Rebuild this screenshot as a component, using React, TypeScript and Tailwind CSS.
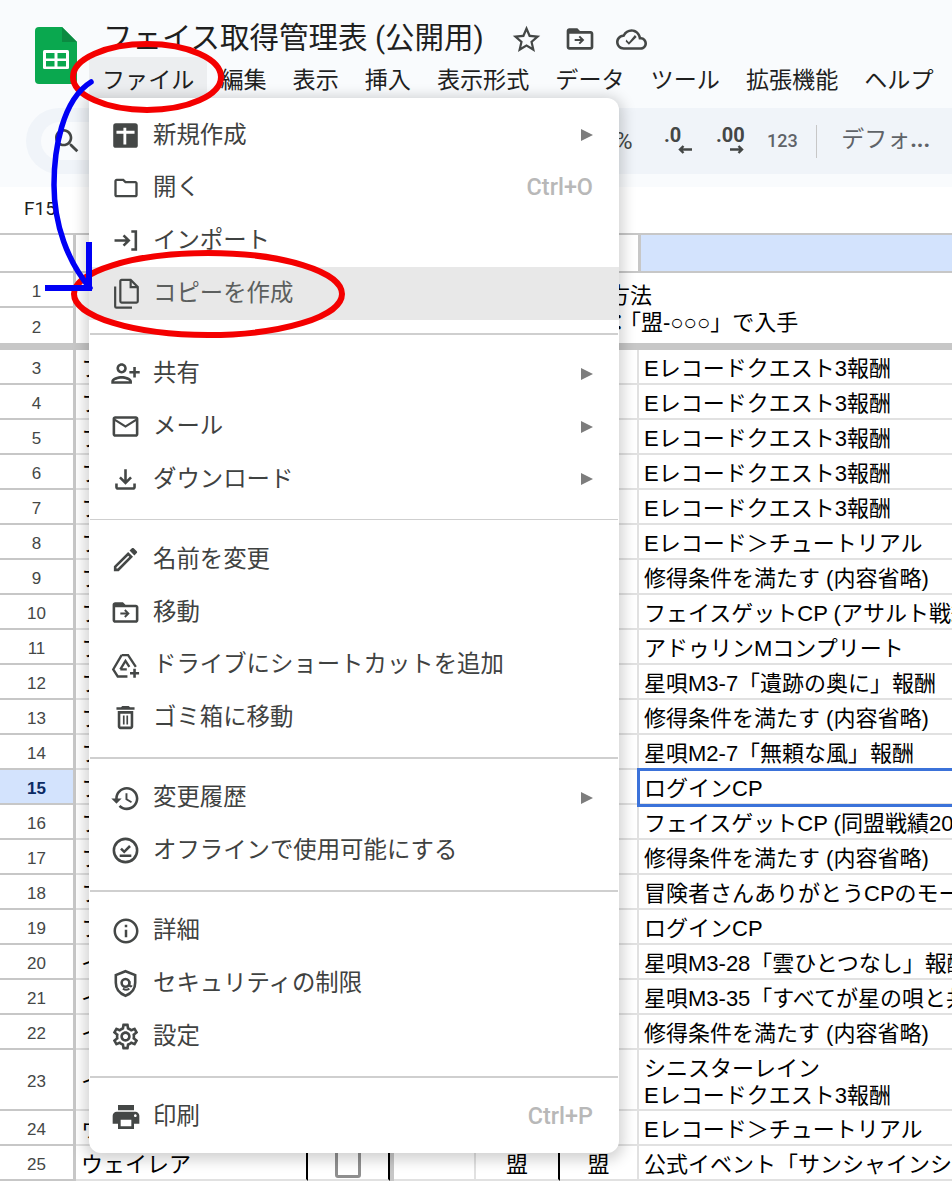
import React from "react";

const ICON = "#444746";
const P: Record<string, string> = {
  star: "M22 9.24l-7.19-.62L12 2 9.19 8.63 2 9.24l5.46 4.73L5.82 21 12 17.27 18.18 21l-1.63-7.03L22 9.24zM12 15.4l-3.76 2.27 1-4.28-3.32-2.88 4.38-.38L12 6.1l1.71 4.04 4.38.38-3.32 2.88 1 4.28L12 15.4z",
  move: "M20 6h-8l-2-2H4c-1.1 0-2 .9-2 2v12c0 1.1.9 2 2 2h16c1.1 0 2-.9 2-2V8c0-1.1-.9-2-2-2zm0 12H4V8h16v10zM12 9.5l-1.06 1.06L12.38 12H8v1.5h4.38l-1.44 1.44L12 16l3.25-3.25L12 9.5z",
  cloud: "M19.35 10.04C18.67 6.59 15.64 4 12 4 9.11 4 6.6 5.64 5.35 8.04 2.34 8.36 0 10.91 0 14c0 3.31 2.69 6 6 6h13c2.76 0 5-2.24 5-5 0-2.64-2.05-4.78-4.65-4.96zM19 18H6c-2.21 0-4-1.79-4-4 0-2.05 1.53-3.76 3.56-3.97l1.07-.11.5-.95C8.08 7.14 9.94 6 12 6c2.62 0 4.88 1.86 5.39 4.43l.3 1.5 1.53.11c1.56.1 2.78 1.41 2.78 2.96 0 1.65-1.35 3-3 3zm-9-3.82l-2.09-2.09L7.5 13.5 10 16l6.01-6.01-1.41-1.41z",
  search: "M15.5 14h-.79l-.28-.27C15.41 12.59 16 11.11 16 9.5 16 5.91 13.09 3 9.5 3S3 5.91 3 9.5 5.91 16 9.5 16c1.61 0 3.09-.59 4.23-1.57l.27.28v.79l5 4.99L20.49 19l-4.99-5zm-6 0C7.01 14 5 11.99 5 9.5S7.01 5 9.5 5 14 7.01 14 9.5 11.99 14 9.5 14z",
  open: "M20 6h-8l-2-2H4c-1.1 0-1.99.9-1.99 2L2 18c0 1.1.9 2 2 2h16c1.1 0 2-.9 2-2V8c0-1.1-.9-2-2-2zm0 12H4V6h5.17l2 2H20v10z",
  person: "M15 12c2.21 0 4-1.79 4-4s-1.79-4-4-4-4 1.79-4 4 1.79 4 4 4zm0-6c1.1 0 2 .9 2 2s-.9 2-2 2-2-.9-2-2 .9-2 2-2zM6 10V7H4v3H1v2h3v3h2v-3h3v-2H6zm9 4c-2.67 0-8 1.34-8 4v2h16v-2c0-2.66-5.33-4-8-4zm-6 4c.22-.72 3.31-2 6-2 2.7 0 5.8 1.29 6 2H9z",
  mail: "M22 6c0-1.1-.9-2-2-2H4c-1.1 0-2 .9-2 2v12c0 1.1.9 2 2 2h16c1.1 0 2-.9 2-2V6zm-2 0l-8 5-8-5h16zm0 12H4V8l8 5 8-5v10z",
  download: "M18 15v3H6v-3H4v3c0 1.1.9 2 2 2h12c1.1 0 2-.9 2-2v-3h-2zm-1-4l-1.41-1.41L13 12.17V4h-2v8.17L8.41 9.59 7 11l5 5 5-5z",
  edit: "M14.06 9.02l.92.92L5.92 19H5v-.92l9.06-9.06M17.66 3c-.25 0-.51.1-.7.29l-1.83 1.83 3.75 3.75 1.83-1.83c.39-.39.39-1.02 0-1.41l-2.34-2.34c-.2-.2-.45-.29-.71-.29zm-3.6 3.19L3 17.25V21h3.75L17.81 9.94l-3.75-3.75z",
  trash: "M16 9v10H8V9h8m-1.5-6h-5l-1 1H5v2h14V4h-3.5l-1-1zM18 7H6v12c0 1.1.9 2 2 2h8c1.1 0 2-.9 2-2V7zM10 10.5h1.3v7H10zM12.7 10.5H14v7h-1.3z",
  history: "M13 3c-4.97 0-9 4.03-9 9H1l3.89 3.89.07.14L9 12H6c0-3.87 3.13-7 7-7s7 3.13 7 7-3.13 7-7 7c-1.93 0-3.68-.79-4.94-2.06l-1.42 1.42C8.27 19.99 10.51 21 13 21c4.97 0 9-4.03 9-9s-4.03-9-9-9zm-1 5v5l4.28 2.54.72-1.21-3.5-2.08V8H12z",
  info: "M11 7h2v2h-2zm0 4h2v6h-2zm1-9C6.48 2 2 6.48 2 12s4.48 10 10 10 10-4.48 10-10S17.52 2 12 2zm0 18c-4.41 0-8-3.59-8-8s3.59-8 8-8 8 3.59 8 8-3.59 8-8 8z",
  gear: "M19.43 12.98c.04-.32.07-.64.07-.98 0-.34-.03-.66-.07-.98l2.11-1.65c.19-.15.24-.42.12-.64l-2-3.46c-.09-.16-.26-.25-.44-.25-.06 0-.12.01-.17.03l-2.49 1c-.52-.4-1.08-.73-1.69-.98l-.38-2.65C14.46 2.18 14.25 2 14 2h-4c-.25 0-.46.18-.49.42l-.38 2.65c-.61.25-1.17.59-1.69.98l-2.49-1c-.06-.02-.12-.03-.18-.03-.17 0-.34.09-.43.25l-2 3.46c-.13.22-.07.49.12.64l2.11 1.65c-.04.32-.07.65-.07.98 0 .33.03.66.07.98l-2.11 1.65c-.19.15-.24.42-.12.64l2 3.46c.09.16.26.25.44.25.06 0 .12-.01.17-.03l2.49-1c.52.4 1.08.73 1.69.98l.38 2.65c.03.24.24.42.49.42h4c.25 0 .46-.18.49-.42l.38-2.65c.61-.25 1.17-.59 1.69-.98l2.49 1c.06.02.12.03.18.03.17 0 .34-.09.43-.25l2-3.46c.12-.22.07-.49-.12-.64l-2.11-1.65zm-1.98-1.71c.04.31.05.52.05.73 0 .21-.02.43-.05.73l-.14 1.13.89.7 1.08.84-.7 1.21-1.27-.51-1.04-.42-.9.68c-.43.32-.84.56-1.25.73l-1.06.43-.16 1.13-.2 1.35h-1.4l-.19-1.35-.16-1.13-1.06-.43c-.43-.18-.83-.41-1.23-.71l-.91-.7-1.06.43-1.27.51-.7-1.21 1.08-.84.89-.7-.14-1.13c-.03-.31-.05-.54-.05-.74s.02-.43.05-.73l.14-1.13-.89-.7-1.08-.84.7-1.21 1.27.51 1.04.42.9-.68c.43-.32.84-.56 1.25-.73l1.06-.43.16-1.13.2-1.35h1.39l.19 1.35.16 1.13 1.06.43c.43.18.83.41 1.23.71l.91.7 1.06-.43 1.27-.51.7 1.21-1.07.85-.89.7.14 1.13zM12 8c-2.21 0-4 1.79-4 4s1.79 4 4 4 4-1.79 4-4-1.79-4-4-4zm0 6c-1.1 0-2-.9-2-2s.9-2 2-2 2 .9 2 2-.9 2-2 2z",
  print: "M19 8H5c-1.66 0-3 1.34-3 3v6h4v4h12v-4h4v-6c0-1.66-1.34-3-3-3zm-3 11H8v-5h8v5zm3-7c-.55 0-1-.45-1-1s.45-1 1-1 1 .45 1 1-.45 1-1 1zm-1-9H6v4h12V3z",
};

function Ic({ name, size = 31, flip, color = ICON }: { name: string; size?: number; flip?: boolean; color?: string }) {
  return (
    <svg width={size} height={size} viewBox="0 0 24 24" fill={color} className="shrink-0">
      <path d={P[name]} transform={flip ? "translate(24 0) scale(-1 1)" : undefined} />
    </svg>
  );
}

function Custom({ name }: { name: string }) {
  const s = { fill: "none", stroke: ICON, strokeWidth: 2 } as const;
  return (
    <svg width={31} height={31} viewBox="0 0 24 24" className="shrink-0">
      {name === "new" && (
        <>
          <rect x="2.5" y="2.5" width="19" height="19" rx="2" fill={ICON} />
          <path d="M5 9.5h14M11.5 6v13" stroke="#fff" strokeWidth="2.2" />
        </>
      )}
      {name === "import" && <path d="M3.5 12h11M10.5 8l4 4-4 4M16.5 5h3.5v14h-3.5" {...s} />}
      {name === "copy" && (
        <>
          <path d="M9 1.5h7l5.5 5.5v11a1 1 0 0 1-1 1H9a1 1 0 0 1-1-1V2.5a1 1 0 0 1 1-1z" {...s} strokeWidth="1.7" />
          <path d="M16 1.5V7h5.5" {...s} strokeWidth="1.7" />
          <path d="M4 6.5V22a1 1 0 0 0 1 1h12" {...s} strokeWidth="1.7" />
        </>
      )}
      {name === "drive" && (
        <>
          <path d="M9 4h5l6 9M9 4l-6.5 11L6 20.5h7.5M8 15l4-6.5 3 4.5M8 15h5" {...s} strokeWidth="1.8" />
          <path d="M19 14.5v7M15.5 18h7" {...s} />
        </>
      )}
      {name === "offline" && (
        <>
          <circle cx="12" cy="12" r="9" {...s} />
          <path d="M8.5 10.5l2.5 2.5 4.5-4.5M7.5 16h9" {...s} />
        </>
      )}
      {name === "shield" && (
        <>
          <path d="M12 2.5l7.5 3v6c0 4.8-3.2 8.4-7.5 10-4.3-1.6-7.5-5.2-7.5-10v-6z" {...s} />
          <circle cx="12" cy="11.5" r="3" {...s} />
          <path d="M15 10v3c0 1.5 1.4 1.5 1.8.5M15 16c-1.5 1-3.5 1-5 0" {...s} strokeWidth="1.6" />
        </>
      )}
    </svg>
  );
}

function MenuRow({ icon, label, right, sub, active }: { icon: React.ReactNode; label: string; right?: string; sub?: boolean; active?: boolean }) {
  return (
    <div className={`flex h-[52.75px] items-center pl-[20px] pr-[26px] ${active ? "bg-[#e8e8e8]" : ""}`}>
      <div className="flex w-[33px] justify-center">{icon}</div>
      <span className={`ml-[11px] flex-1 text-[23.4px] leading-none whitespace-nowrap ${active ? "text-[#5c5f5e]" : "text-[#3f4241]"}`}>{label}</span>
      {right && <span className="text-[23.4px] leading-none font-medium text-[#b8b8b8]">{right}</span>}
      {sub && (
        <svg width="12" height="12" viewBox="0 0 12 12" className="shrink-0">
          <path d="M0 0l12 6-12 6z" fill="#7d7d7d" />
        </svg>
      )}
    </div>
  );
}

const Sep = () => <div className="mx-[1px] my-[13px] h-[1.5px] bg-[#cfcfcf]" />;

type R = { n: number; a: string; f: string[]; h?: string; sel?: boolean; check?: boolean; mei?: boolean };
const Q = "Eレコードクエスト3報酬";
const T = "Eレコード＞チュートリアル";
const S = "修得条件を満たす (内容省略)";
const rows: R[] = [
  [3, "フ", Q], [4, "フ", Q], [5, "フ", Q], [6, "フ", Q], [7, "フ", Q], [8, "フ", T], [9, "フ", S],
  [10, "フ", "フェイスゲットCP (アサルト戦績"], [11, "フ", "アドゥリンMコンプリート"], [12, "フ", "星唄M3-7「遺跡の奥に」報酬"],
  [13, "フ", S], [14, "フ", "星唄M2-7「無頼な風」報酬"], [15, "フ", "ログインCP"], [16, "フ", "フェイスゲットCP (同盟戦績20"],
  [17, "フ", S], [18, "フ", "冒険者さんありがとうCPのモーグリ"], [19, "フ", "ログインCP"], [20, "イ", "星唄M3-28「雲ひとつなし」報酬"],
  [21, "イ", "星唄M3-35「すべてが星の唄と共に」"], [22, "イ", S],
].map(([n, a, f]) => ({ n: n as number, a: a as string, f: [f as string], sel: n === 15 }));
rows.push({ n: 23, a: "イ", f: ["シニスターレイン", Q], h: "h-[61px]" });
rows.push({ n: 24, a: "ウ", f: [T] });
rows.push({ n: 25, a: "ウェイレア", f: ["公式イベント「サンシャインシーカー」"], check: true, mei: true });

function GridRow({ r }: { r: R }) {
  const line = "border-b-2 border-[#e1e1e1]";
  return (
    <div className={`flex ${r.h ?? "h-[35px]"}`}>
      <div className={`flex w-[76px] shrink-0 items-center justify-center border-r-[3px] border-b-2 border-[#c7c7c7] pt-[4px] text-[17px] ${r.sel ? "bg-[#d3e3fd] font-bold text-[#0b2a63]" : "bg-white text-[#444746]"}`}>{r.n}</div>
      <div className={`flex w-[232px] shrink-0 items-center border-r-2 border-r-black pt-[4px] pl-[5px] ${line}`}>{r.a}</div>
      <div className={`flex w-[82px] shrink-0 items-center justify-center border-r-2 border-r-black ${line}`}>
        {r.check && <div className="h-[30px] w-[26px] rounded-[3px] border-[3px] border-[#8f8f8f]" />}
      </div>
      <div className="w-[4px] shrink-0 border-b-2 border-[#c7c7c7] bg-[#c7c7c7]" />
      <div className={`w-[82px] shrink-0 border-r-2 border-r-[#e1e1e1] ${line}`} />
      <div className={`flex w-[84px] shrink-0 items-center justify-center border-r-2 border-r-black pt-[4px] ${line}`}>{r.mei && "盟"}</div>
      <div className={`flex w-[79px] shrink-0 items-center justify-center border-r-2 border-r-[#e1e1e1] pt-[4px] ${line}`}>{r.mei && "盟"}</div>
      <div className={`relative flex w-[400px] shrink-0 flex-col justify-center pt-[4px] pl-[5px] leading-[27px] whitespace-nowrap ${line} ${r.sel ? "z-10 outline-3 -outline-offset-1 outline-[#3b72d9]" : ""}`}>
        {r.f.map((t) => (
          <div key={t}>{t}</div>
        ))}
      </div>
    </div>
  );
}

const menuBar = ["ファイル", "編集", "表示", "挿入", "表示形式", "データ", "ツール", "拡張機能", "ヘルプ"];

export default function App() {
  return (
    <div className="relative h-[1182px] w-[952px] overflow-hidden bg-white text-[22px] leading-none text-black [font-family:'Liberation_Sans','Noto_Sans_CJK_JP',sans-serif]">
      {/* header */}
      <header className="h-[187px] bg-[#f9fbfd] [font-family:Roboto,'Noto_Sans_CJK_JP',sans-serif]">
        <div className="flex h-[108px]">
          <svg width="42" height="57" viewBox="0 0 42 57" className="mt-[27px] ml-[35px] shrink-0">
            <path d="M4 0h23l15 15v38a4 4 0 0 1-4 4H4a4 4 0 0 1-4-4V4a4 4 0 0 1 4-4z" fill="#0aa84f" />
            <path d="M27 0l15 15-15 0z" fill="#0b8a41" />
            <rect x="8" y="23" width="26" height="19" rx="1.5" fill="#fff" />
            <rect x="11" y="26" width="8.5" height="5.5" fill="#0aa84f" />
            <rect x="22.5" y="26" width="8.5" height="5.5" fill="#0aa84f" />
            <rect x="11" y="34" width="8.5" height="5.5" fill="#0aa84f" />
            <rect x="22.5" y="34" width="8.5" height="5.5" fill="#0aa84f" />
          </svg>
          <div className="ml-[12px] flex flex-col">
            <div className="flex h-[57px] items-center pt-[21px] pl-[14px]">
              <span className="text-[29.5px] leading-none whitespace-nowrap text-[#1f1f1f]">フェイス取得管理表 (公開用)</span>
              <div className="ml-[26px]"><Ic name="star" size={33} /></div>
              <div className="ml-[21px]"><Ic name="move" size={32} /></div>
              <div className="ml-[20px]"><Ic name="cloud" size={31} /></div>
            </div>
            <div className="flex h-[41px] text-[23.1px] text-[#1f1f1f]">
              {menuBar.map((m, i) => (
                <span key={m} className={`flex items-center px-[13px] pt-[6px] whitespace-nowrap ${i === 0 ? "bg-[#eceef0]" : ""}`}>{m}</span>
              ))}
            </div>
          </div>
        </div>
        {/* toolbar */}
        <div className="ml-[26px] flex h-[66px] w-[960px] items-center rounded-l-[33px] bg-[#f0f4f9] text-[#444746]">
          <div className="ml-[15px] flex h-[38px] w-[180px] items-center rounded-l-[19px] bg-[#f9fbfd] pl-[10px]">
            <Ic name="search" size={32} />
          </div>
          <span className="ml-[394px] w-[21px] text-[24px]">%</span>
          <div className="relative ml-[28px] h-[40px] w-[30px] font-bold">
            <span className="absolute top-[4px] left-0 text-[20px]">.0</span>
            <svg width="14" height="9" viewBox="0 0 14 9" className="absolute bottom-[7px] left-[14px]"><path d="M14 4.5H2M5.5 1L2 4.5 5.5 8" fill="none" stroke="#444746" strokeWidth="2.4" /></svg>
          </div>
          <div className="relative ml-[22px] h-[40px] w-[30px] font-bold">
            <span className="absolute top-[4px] left-0 text-[20px]">.00</span>
            <svg width="14" height="9" viewBox="0 0 14 9" className="absolute bottom-[7px] left-[14px]"><path d="M0 4.5h12M8.5 1L12 4.5 8.5 8" fill="none" stroke="#444746" strokeWidth="2.4" /></svg>
          </div>
          <span className="ml-[21px] text-[18px] font-medium text-[#5f6368]">123</span>
          <div className="ml-[18px] h-[33px] w-[1.5px] bg-[#c7c7c7]" />
          <span className="ml-[24px] pb-[4px] text-[23px] whitespace-nowrap text-[#5f6368]">デフォ<span className="font-bold">...</span></span>
        </div>
      </header>

      {/* formula bar */}
      <div className="flex h-[46px] items-center bg-white pb-[3px] pl-[24px] text-[19px] text-[#1f1f1f] [font-family:Roboto,sans-serif]">F15</div>

      {/* sheet */}
      <div className="w-[1100px]">
        <div className="flex h-[40px] border-t-2 border-b-2 border-[#c7c7c7]">
          <div className="w-[76px] shrink-0 border-r-[3px] border-[#c7c7c7]" />
          <div className="w-[562px] shrink-0" />
          <div className="w-[3px] shrink-0 bg-[#c7c7c7]" />
          <div className="w-[400px] shrink-0 bg-[#d3e3fd]" />
        </div>
        <div className="flex h-[35px]">
          <div className="flex w-[76px] shrink-0 items-center justify-center border-r-[3px] border-b-2 border-[#c7c7c7] pt-[4px] text-[17px] text-[#444746]">1</div>
          <div className="flex w-[800px] shrink-0 items-center pt-[10px] pl-[488px] whitespace-nowrap">入手方法</div>
        </div>
        <div className="flex h-[35px]">
          <div className="flex w-[76px] shrink-0 items-center justify-center border-r-[3px] border-[#c7c7c7] pt-[4px] text-[17px] text-[#444746]">2</div>
          <div className="flex w-[800px] shrink-0 items-center pb-[6px] pl-[488px] whitespace-nowrap">同盟：「盟-○○○」で入手</div>
        </div>
        <div className="h-[7px] bg-[#c7c7c7]" />
        {rows.map((r) => (
          <GridRow key={r.n} r={r} />
        ))}
      </div>

      {/* file menu */}
      <div className="absolute top-[98px] left-[89px] z-20 h-[1055px] w-[530px] rounded-b-[12px] rounded-tr-[12px] bg-white pt-[11px] shadow-[0_3px_14px_4px_rgba(0,0,0,0.18)] [font-family:Roboto,'Noto_Sans_CJK_JP',sans-serif]">
        <MenuRow icon={<Custom name="new" />} label="新規作成" sub />
        <MenuRow icon={<Ic name="open" size={28} />} label="開く" right="Ctrl+O" />
        <MenuRow icon={<Custom name="import" />} label="インポート" />
        <MenuRow icon={<Custom name="copy" />} label="コピーを作成" active />
        <Sep />
        <MenuRow icon={<Ic name="person" flip />} label="共有" sub />
        <MenuRow icon={<Ic name="mail" />} label="メール" sub />
        <MenuRow icon={<Ic name="download" />} label="ダウンロード" sub />
        <Sep />
        <MenuRow icon={<Ic name="edit" />} label="名前を変更" />
        <MenuRow icon={<Ic name="move" />} label="移動" />
        <MenuRow icon={<Custom name="drive" />} label="ドライブにショートカットを追加" />
        <MenuRow icon={<Ic name="trash" />} label="ゴミ箱に移動" />
        <Sep />
        <MenuRow icon={<Ic name="history" />} label="変更履歴" sub />
        <MenuRow icon={<Custom name="offline" />} label="オフラインで使用可能にする" />
        <Sep />
        <MenuRow icon={<Ic name="info" size={30} />} label="詳細" />
        <MenuRow icon={<Custom name="shield" />} label="セキュリティの制限" />
        <MenuRow icon={<Ic name="gear" />} label="設定" />
        <Sep />
        <MenuRow icon={<Ic name="print" size={32} />} label="印刷" right="Ctrl+P" />
      </div>

      {/* hand-drawn annotations */}
      <svg width="952" height="1182" viewBox="0 0 952 1182" className="pointer-events-none absolute top-0 left-0 z-30">
        <ellipse cx="147" cy="77" rx="74" ry="33" fill="none" stroke="#f40000" strokeWidth="6" />
        <ellipse cx="208" cy="294" rx="134" ry="41" fill="none" stroke="#f40000" strokeWidth="6" />
        <path d="M91 82C62 100 54 150 54 185C54 225 68 262 90 288" fill="none" stroke="#0000f5" strokeWidth="5.5" strokeLinecap="round" />
        <path d="M89 242V291M45 288H92" fill="none" stroke="#0000f5" strokeWidth="6" />
      </svg>
    </div>
  );
}
